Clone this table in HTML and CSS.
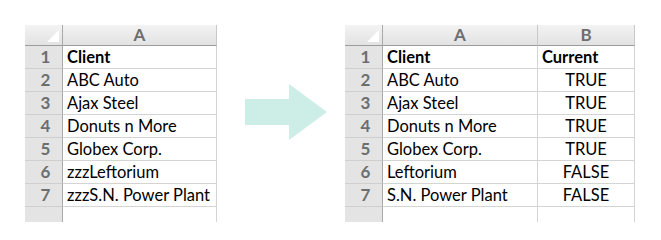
FILE: index.html
```html
<!DOCTYPE html>
<html>
<head>
<meta charset="utf-8">
<link rel="stylesheet" href="styles.css">
</head>
<body>
<div class="page">
  <div class="sheet sheet-left">
    <div class="clip">
      <div class="grid grid-1">
        <div class="corner"><span class="tri"></span></div>
        <div class="colhead">A</div>
        <div class="rowhead">1</div><div class="cell bold">Client</div>
        <div class="rowhead">2</div><div class="cell">ABC Auto</div>
        <div class="rowhead">3</div><div class="cell">Ajax Steel</div>
        <div class="rowhead">4</div><div class="cell">Donuts n More</div>
        <div class="rowhead">5</div><div class="cell">Globex Corp.</div>
        <div class="rowhead">6</div><div class="cell">zzzLeftorium</div>
        <div class="rowhead">7</div><div class="cell">zzzS.N. Power Plant</div>
        <div class="rowhead"></div><div class="cell"></div>
      </div>
    </div>
  </div>
  <div class="arrow-wrap">
    <svg class="arrow" width="82" height="56" viewBox="0 0 82 56">
      <polygon points="0,15 44,15 44,0 82,28 44,56 44,41 0,41" fill="#cdeee7"/>
    </svg>
  </div>
  <div class="sheet sheet-right">
    <div class="clip">
      <div class="grid grid-2">
        <div class="corner"><span class="tri"></span></div>
        <div class="colhead">A</div>
        <div class="colhead">B</div>
        <div class="rowhead">1</div><div class="cell bold">Client</div><div class="cell bold">Current</div>
        <div class="rowhead">2</div><div class="cell">ABC Auto</div><div class="cell center">TRUE</div>
        <div class="rowhead">3</div><div class="cell">Ajax Steel</div><div class="cell center">TRUE</div>
        <div class="rowhead">4</div><div class="cell">Donuts n More</div><div class="cell center">TRUE</div>
        <div class="rowhead">5</div><div class="cell">Globex Corp.</div><div class="cell center">TRUE</div>
        <div class="rowhead">6</div><div class="cell">Leftorium</div><div class="cell center">FALSE</div>
        <div class="rowhead">7</div><div class="cell">S.N. Power Plant</div><div class="cell center">FALSE</div>
        <div class="rowhead"></div><div class="cell"></div><div class="cell"></div>
      </div>
    </div>
  </div>
</div>
</body>
</html>
```
FILE: styles.css
```css
html, body {
  margin: 0;
  padding: 0;
  background: #ffffff;
}
.page {
  display: flex;
  align-items: flex-start;
  width: 661px;
  height: 240px;
  padding-top: 25px;
  box-sizing: border-box;
}
.sheet-left {
  margin-left: 25px;
}
.clip {
  height: 197px;
  overflow: hidden;
}
.grid {
  display: grid;
  grid-auto-rows: 23px;
  font-family: "Lato", "Liberation Sans", sans-serif;
  font-size: 16.5px;
  color: #000;
}
.grid-1 {
  grid-template-columns: 38px 154px;
  grid-template-rows: 21px;
}
.grid-2 {
  grid-template-columns: 38px 155px 97px;
  grid-template-rows: 21px;
}
.corner {
  position: relative;
  background: linear-gradient(#f3f3f3, #e2e2e2);
  border-right: 1px solid #a9a9a9;
  border-bottom: 1px solid #9c9c9c;
  box-sizing: border-box;
}
.tri {
  position: absolute;
  right: 3px;
  bottom: 3px;
  width: 0;
  height: 0;
  border-left: 12px solid transparent;
  border-bottom: 12px solid #ffffff;
}
.colhead {
  background: linear-gradient(#f3f3f3, #e2e2e2);
  border-right: 1px solid #c9c9c9;
  border-bottom: 1px solid #9c9c9c;
  box-sizing: border-box;
  text-align: center;
  font-weight: bold;
  color: #6e6e6e;
  font-size: 17px;
  line-height: 20px;
}
.rowhead {
  background: #e4e4e4;
  border-right: 1px solid #a9a9a9;
  border-bottom: 1px solid #cfcfcf;
  box-sizing: border-box;
  text-align: center;
  font-weight: bold;
  color: #6e6e6e;
  font-size: 17px;
  line-height: 22px;
  padding-left: 4px;
}
.cell {
  border-right: 1px solid #d4d4d4;
  border-bottom: 1px solid #d4d4d4;
  box-sizing: border-box;
  padding-left: 4px;
  line-height: 22px;
  white-space: nowrap;
}
.bold {
  font-weight: bold;
}
.center {
  text-align: center;
  padding-left: 0;
}
.arrow-wrap {
  margin-left: 28px;
  margin-top: 59px;
}
.arrow {
  display: block;
}
.sheet-right {
  margin-left: 18px;
}
```
